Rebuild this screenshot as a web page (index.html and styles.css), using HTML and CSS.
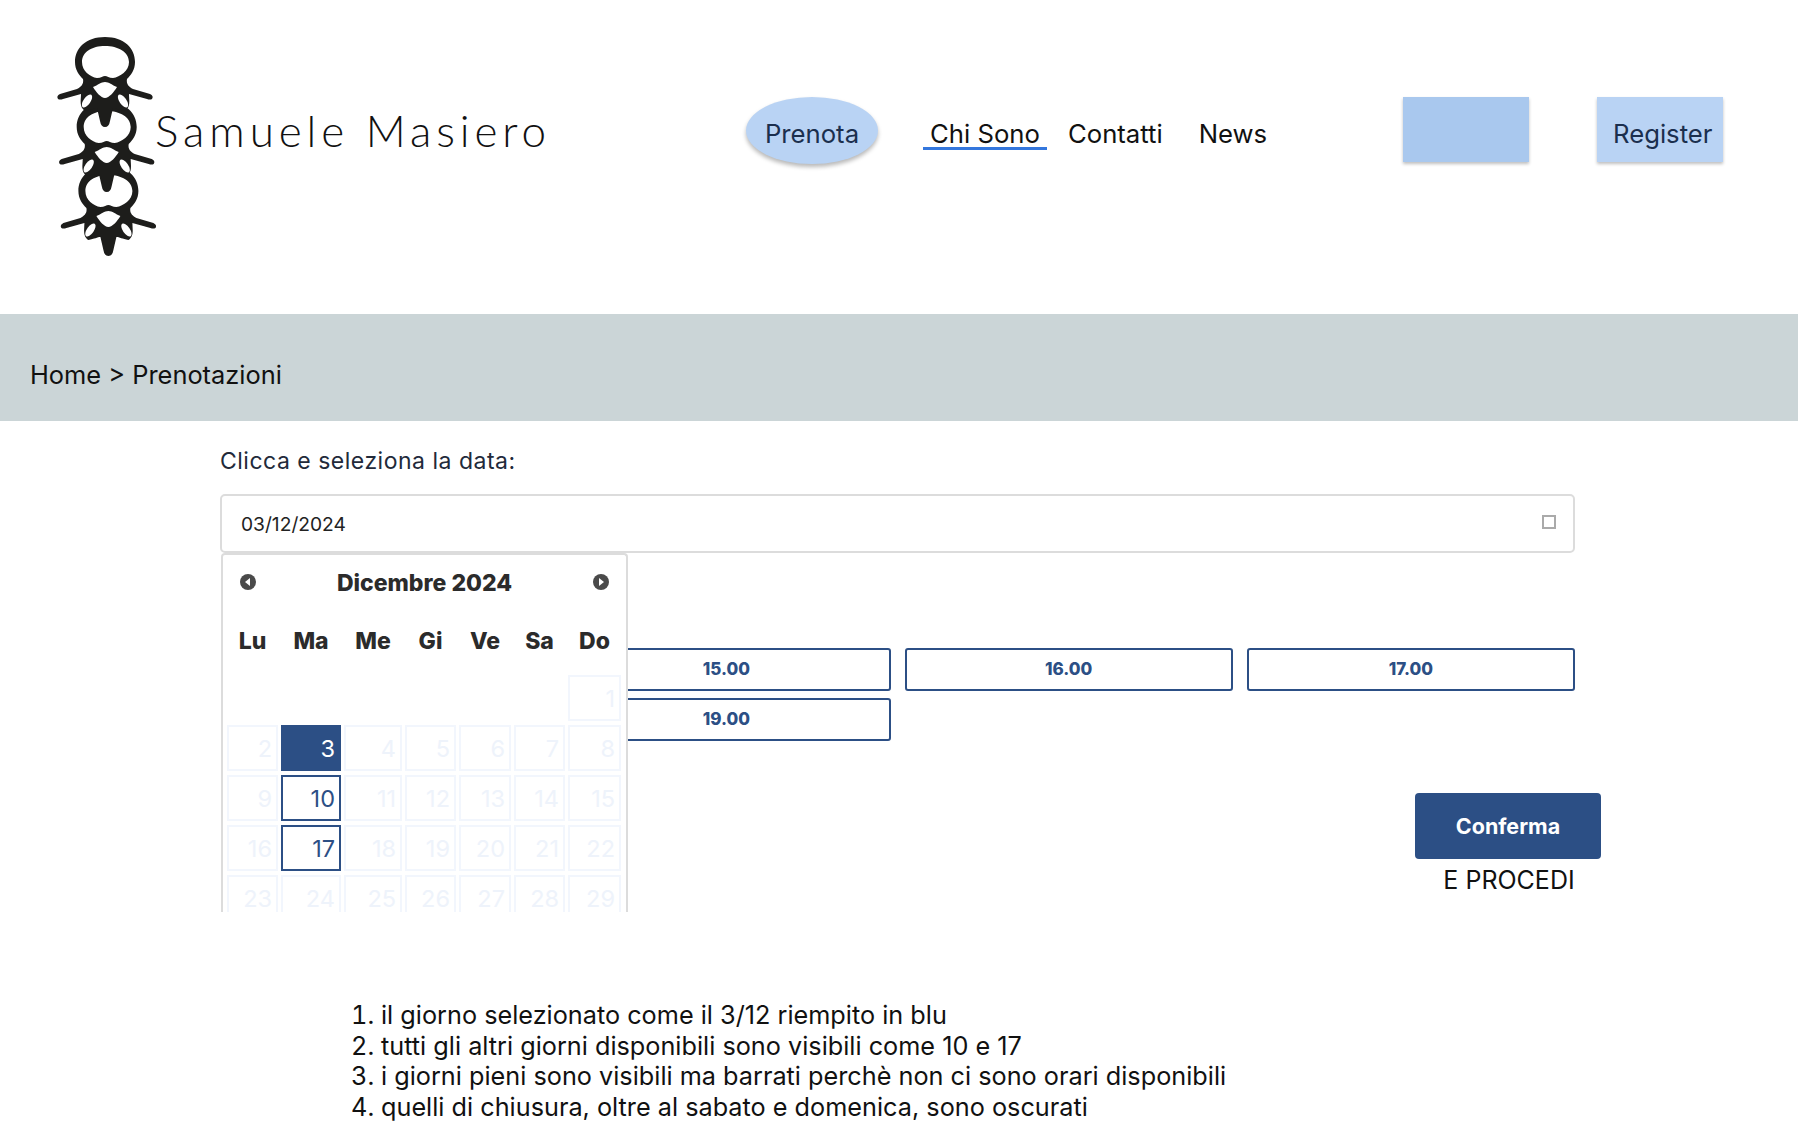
FILE: index.html
```html
<!DOCTYPE html>
<html lang="it">
<head>
<meta charset="utf-8">
<title>Prenotazioni</title>
<link rel="stylesheet" href="styles.css">
</head>
<body>
<header class="header">
  <div class="logo">
    <svg class="logo-mark" viewBox="56 35 100 224" width="100" height="224" aria-hidden="true">
      <defs>
        <g id="vertebra">
          <path fill="#1d1d1b" d="M105 37C86 37 75 48 75 62C75 70 79 75 83 79C84 84 81 87 77 89L60 94Q56 96 58 99Q60 100 63 99L81 94C81 100 79 107 85 111C91 110 94 108 97 108L100 121Q101 127 105 127Q109 127 110 121L113 108C116 108 119 110 125 111C131 107 129 100 129 94L147 99Q150 100 152 99Q154 96 150 94L133 89C129 87 126 84 127 79C131 75 135 70 135 62C135 48 124 37 105 37Z"/>
          <path fill="#fff" d="M105 46C92 46 82 52 82 62C82 71 90 77 97 78C101 78 103 76 105 76C107 76 109 78 113 78C120 77 129 71 129 62C129 52 118 46 105 46Z"/>
          <path fill="#fff" d="M93 87C98 85 101 82 105 82C109 82 112 85 117 87C114 92 109 98 105 98C101 98 96 92 93 87Z"/>
          <ellipse fill="#fff" cx="87" cy="101" rx="3.5" ry="7.5" transform="rotate(35 87 101)"/>
          <ellipse fill="#fff" cx="123" cy="101" rx="3.5" ry="7.5" transform="rotate(-35 123 101)"/>
        </g>
      </defs>
      <use href="#vertebra" transform="translate(3.4 129)"/>
      <use href="#vertebra" transform="translate(1.7 65)"/>
      <use href="#vertebra"/>
    </svg>
    <span class="logo-text">Samuele Masiero</span>
  </div>
  <nav class="nav">
    <a class="nav-book">Prenota</a>
    <a class="nav-link nav-current">Chi Sono</a>
    <a class="nav-link nav-contact">Contatti</a>
    <a class="nav-link nav-news">News</a>
  </nav>
  <div class="auth">
    <a class="auth-box auth-empty"></a>
    <a class="auth-box auth-register">Register</a>
  </div>
</header>

<div class="crumbs">Home &gt; Prenotazioni</div>

<main class="main">
  <p class="field-label">Clicca e seleziona la data:</p>
  <div class="date-area">
    <div class="date-input">
      <span>03/12/2024</span>
      <span class="date-icon"></span>
    </div>

    <section class="calendar">
      <div class="cal-head">
        <svg class="cal-arrow" viewBox="0 0 16 16" width="16" height="16" aria-hidden="true"><circle cx="8" cy="8" r="8" fill="#4a4a4a"/><path d="M10 4v8L5 8z" fill="#fff"/></svg>
        <span class="cal-title">Dicembre 2024</span>
        <svg class="cal-arrow" viewBox="0 0 16 16" width="16" height="16" aria-hidden="true"><circle cx="8" cy="8" r="8" fill="#4a4a4a"/><path d="M6 4v8l5-4z" fill="#fff"/></svg>
      </div>
      <div class="cal-grid cal-days">
        <span>Lu</span><span>Ma</span><span>Me</span><span>Gi</span><span>Ve</span><span>Sa</span><span>Do</span>
      </div>
      <div class="cal-grid cal-cells">
        <span class="blank"></span><span class="blank"></span><span class="blank"></span><span class="blank"></span><span class="blank"></span><span class="blank"></span><span class="day">1</span>
        <span class="day">2</span><span class="day selected">3</span><span class="day">4</span><span class="day">5</span><span class="day">6</span><span class="day">7</span><span class="day">8</span>
        <span class="day">9</span><span class="day open">10</span><span class="day">11</span><span class="day">12</span><span class="day">13</span><span class="day">14</span><span class="day">15</span>
        <span class="day">16</span><span class="day open">17</span><span class="day">18</span><span class="day">19</span><span class="day">20</span><span class="day">21</span><span class="day">22</span>
        <span class="day">23</span><span class="day">24</span><span class="day">25</span><span class="day">26</span><span class="day">27</span><span class="day">28</span><span class="day">29</span>
      </div>
    </section>

    <div class="slots">
      <span class="slot-gap"></span>
      <a class="slot">15.00</a>
      <a class="slot">16.00</a>
      <a class="slot">17.00</a>
      <span class="slot-gap"></span>
      <a class="slot">19.00</a>
    </div>
  </div>

  <div class="actions">
    <a class="confirm">Conferma</a>
    <span class="proceed">E PROCEDI</span>
  </div>

  <ol class="notes">
    <li>il giorno selezionato come il 3/12 riempito in blu</li>
    <li>tutti gli altri giorni disponibili sono visibili come 10 e 17</li>
    <li>i giorni pieni sono visibili ma barrati perchè non ci sono orari disponibili</li>
    <li>quelli di chiusura, oltre al sabato e domenica, sono oscurati</li>
  </ol>
</main>
</body>
</html>
```

FILE: styles.css
```css
* { box-sizing: border-box; }
html, body { margin: 0; padding: 0; }
body {
  width: 1798px;
  height: 1144px;
  overflow: hidden;
  background: #fff;
  color: #111;
  font-family: Inter, "Noto Sans", sans-serif;
}

.header {
  display: flex;
  align-items: flex-start;
  height: 314px;
  padding-right: 75px;
}
.logo {
  display: flex;
  align-items: flex-start;
  width: 746px;
  padding: 35px 0 0 56px;
  flex: none;
}
.logo-mark { flex: none; display: block; }
.logo-text {
  margin: 70px 0 0 -1px;
  font-family: Lato, sans-serif;
  font-weight: 300;
  font-size: 44px;
  line-height: 50px;
  letter-spacing: 4.9px;
  white-space: nowrap;
  color: #111;
}

.nav {
  display: flex;
  align-items: flex-start;
  padding-top: 97px;
  font-size: 25.7px;
}
.nav-book {
  width: 132px;
  height: 67px;
  border-radius: 50%;
  background: #b9d3f4;
  box-shadow: 0 3px 4px rgba(0, 0, 0, .28);
  color: #1b2f4e;
  text-align: center;
  line-height: 74px;
}
.nav-link { line-height: 74px; height: 53px; white-space: nowrap; }
.nav-current {
  margin-left: 45px;
  width: 124px;
  text-align: center;
  border-bottom: 3px solid #3477dd;
}
.nav-contact { margin-left: 21px; }
.nav-news { margin-left: 36px; }

.auth {
  display: flex;
  gap: 68px;
  margin-left: auto;
  padding-top: 97px;
}
.auth-box {
  display: block;
  width: 126px;
  height: 65px;
  box-shadow: 0 2px 3px rgba(0, 0, 0, .25);
}
.auth-empty { background: #a9c8ee; }
.auth-register {
  background: #b9d3f4;
  color: #1b2f4e;
  font-size: 25.7px;
  line-height: 74px;
  padding-left: 16px;
}

.crumbs {
  display: flex;
  align-items: center;
  height: 107px;
  padding: 14px 0 0 30px;
  background: #cbd5d7;
  font-size: 25.4px;
}

.main { padding-left: 220px; width: 1601px; }
.field-label {
  margin: 25px 0 18px;
  font-size: 23px;
  font-weight: 400;
  letter-spacing: .5px;
  line-height: 30px;
  color: #222a3a;
}
.date-area { position: relative; width: 1355px; }
.date-input {
  display: flex;
  align-items: center;
  justify-content: space-between;
  height: 59px;
  padding: 0 17px 0 19px;
  border: 2px solid #dcdcdc;
  border-radius: 5px;
  font-size: 19.2px;
  color: #222;
}
.date-icon {
  width: 14px;
  height: 14px;
  margin-top: -3px;
  border: 2px solid #aaa;
}

.calendar {
  position: absolute;
  left: 1px;
  top: 59px;
  width: 407px;
  height: 359px;
  overflow: hidden;
  padding: 0 4px;
  background: #fff;
  border: 2px solid #dcdcdc;
  border-bottom: 0;
  border-radius: 4px 4px 0 0;
}
.cal-head {
  display: flex;
  align-items: center;
  justify-content: space-between;
  height: 54px;
  padding: 0 13px;
}
.cal-arrow { margin-top: -1px; }
.cal-title { font-size: 23px; font-weight: 800; color: #2b2b2b; margin-top: 2px; }
.cal-grid {
  display: grid;
  grid-template-columns: 51px 60px 58px 51px 52px 51px 53px;
  column-gap: 3px;
}
.cal-days {
  height: 66px;
  align-items: center;
  font-size: 23px;
  font-weight: 800;
  color: #2b2b2b;
  text-align: center;
  padding-bottom: 2px;
}
.cal-cells { grid-auto-rows: 46px; row-gap: 4px; }
.day {
  border: 2px solid #f2f6fd;
  padding-right: 4px;
  text-align: right;
  font-size: 23.5px;
  line-height: 43px;
  color: #eef3fb;
}
.selected { background: #2c4f85; border-color: #2c4f85; color: #fff; }
.open { border-color: #2c4f85; color: #2c4f85; }

.slots {
  display: grid;
  grid-template-columns: repeat(4, 1fr);
  grid-auto-rows: 43px;
  gap: 7px 14px;
  margin-top: 95px;
}
.slot {
  display: flex;
  align-items: center;
  justify-content: center;
  padding-bottom: 1px;
  border: 2px solid #2c4f85;
  border-radius: 3px;
  font-size: 17px;
  font-weight: 800;
  color: #2c4f85;
}

.actions {
  display: flex;
  flex-direction: column;
  align-items: center;
  width: 186px;
  margin: 52px 0 0 auto;
}
.confirm {
  display: flex;
  align-items: center;
  justify-content: center;
  width: 186px;
  height: 66px;
  background: #2c4f85;
  border-radius: 4px;
  color: #fff;
  font-size: 21.5px;
  font-weight: 700;
}
.proceed { font-size: 25px; line-height: 30px; margin: 6px 0 0 2px; white-space: nowrap; }

.notes {
  margin: 105px 0 0;
  padding-left: 161px;
  font-size: 25.25px;
  line-height: 30.5px;
  color: #111;
}
```
